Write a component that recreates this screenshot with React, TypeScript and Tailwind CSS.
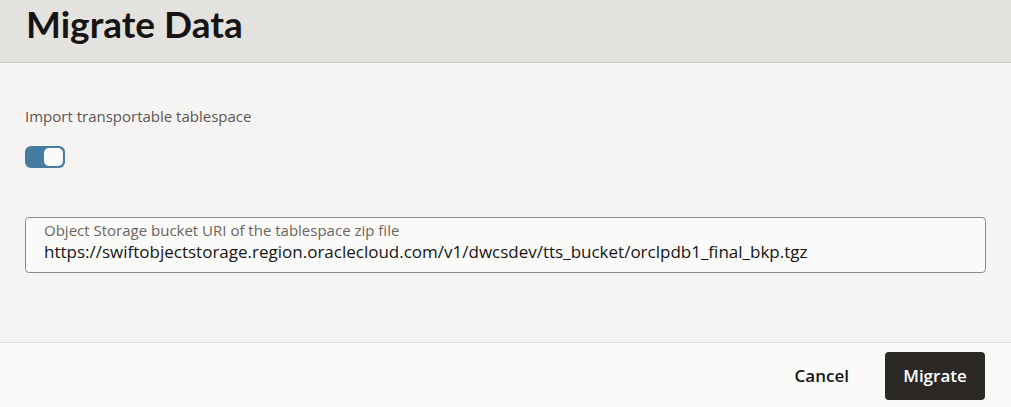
const App = (): React.ReactNode => {
  return (
    <div className="w-[1011px] h-[407px] flex flex-col bg-[#f5f4f2] overflow-hidden" style={{ fontFamily: "'Open Sans', 'Liberation Sans', sans-serif" }}>
      <div className="h-[63px] shrink-0 bg-[#e4e2de] border-b border-[#cfcbc6] flex items-start px-[26px]">
        <h1 className="text-[37px] leading-none font-bold text-[#161513] mt-[5px]" style={{ fontFamily: "Lato, 'Open Sans', sans-serif" }}>Migrate Data</h1>
      </div>

      <div className="flex-1 flex flex-col px-[25px] pt-[44px]">
        <p className="text-[15px] text-[#5c5753] leading-[18px]">Import transportable tablespace</p>

        <button className="mt-[21px] w-[40px] h-[22px] rounded-[6px] bg-[#467ca0] flex items-center justify-end pr-[2px]">
          <span className="w-[19px] h-[18px] rounded-[5px] bg-[#fafaf9]" />
        </button>

        <div className="mt-[49px] h-[56px] rounded-[4px] border border-[#8f8a85] bg-[#fafaf9] px-[18px] pt-[3px] flex flex-col">
          <span className="text-[15px] leading-[18px] text-[#6b6560]">Object Storage bucket URI of the tablespace zip file</span>
          <span className="text-[17px] leading-[26px] text-[#161513]">https://swiftobjectstorage.region.oraclecloud.com/v1/dwcsdev/tts_bucket/orclpdb1_final_bkp.tgz</span>
        </div>
      </div>

      <div className="h-[65px] shrink-0 bg-[#fafaf9] border-t border-[#e0ddd9] flex items-start justify-end gap-[14px] pr-[26px] pt-[9px]">
        <button className="h-[48px] px-[22px] text-[17px] font-semibold text-[#161513]">Cancel</button>
        <button className="h-[48px] w-[100px] rounded-[4px] bg-[#2b2826] text-[17px] font-semibold text-white">Migrate</button>
      </div>
    </div>
  )
}

export default App
